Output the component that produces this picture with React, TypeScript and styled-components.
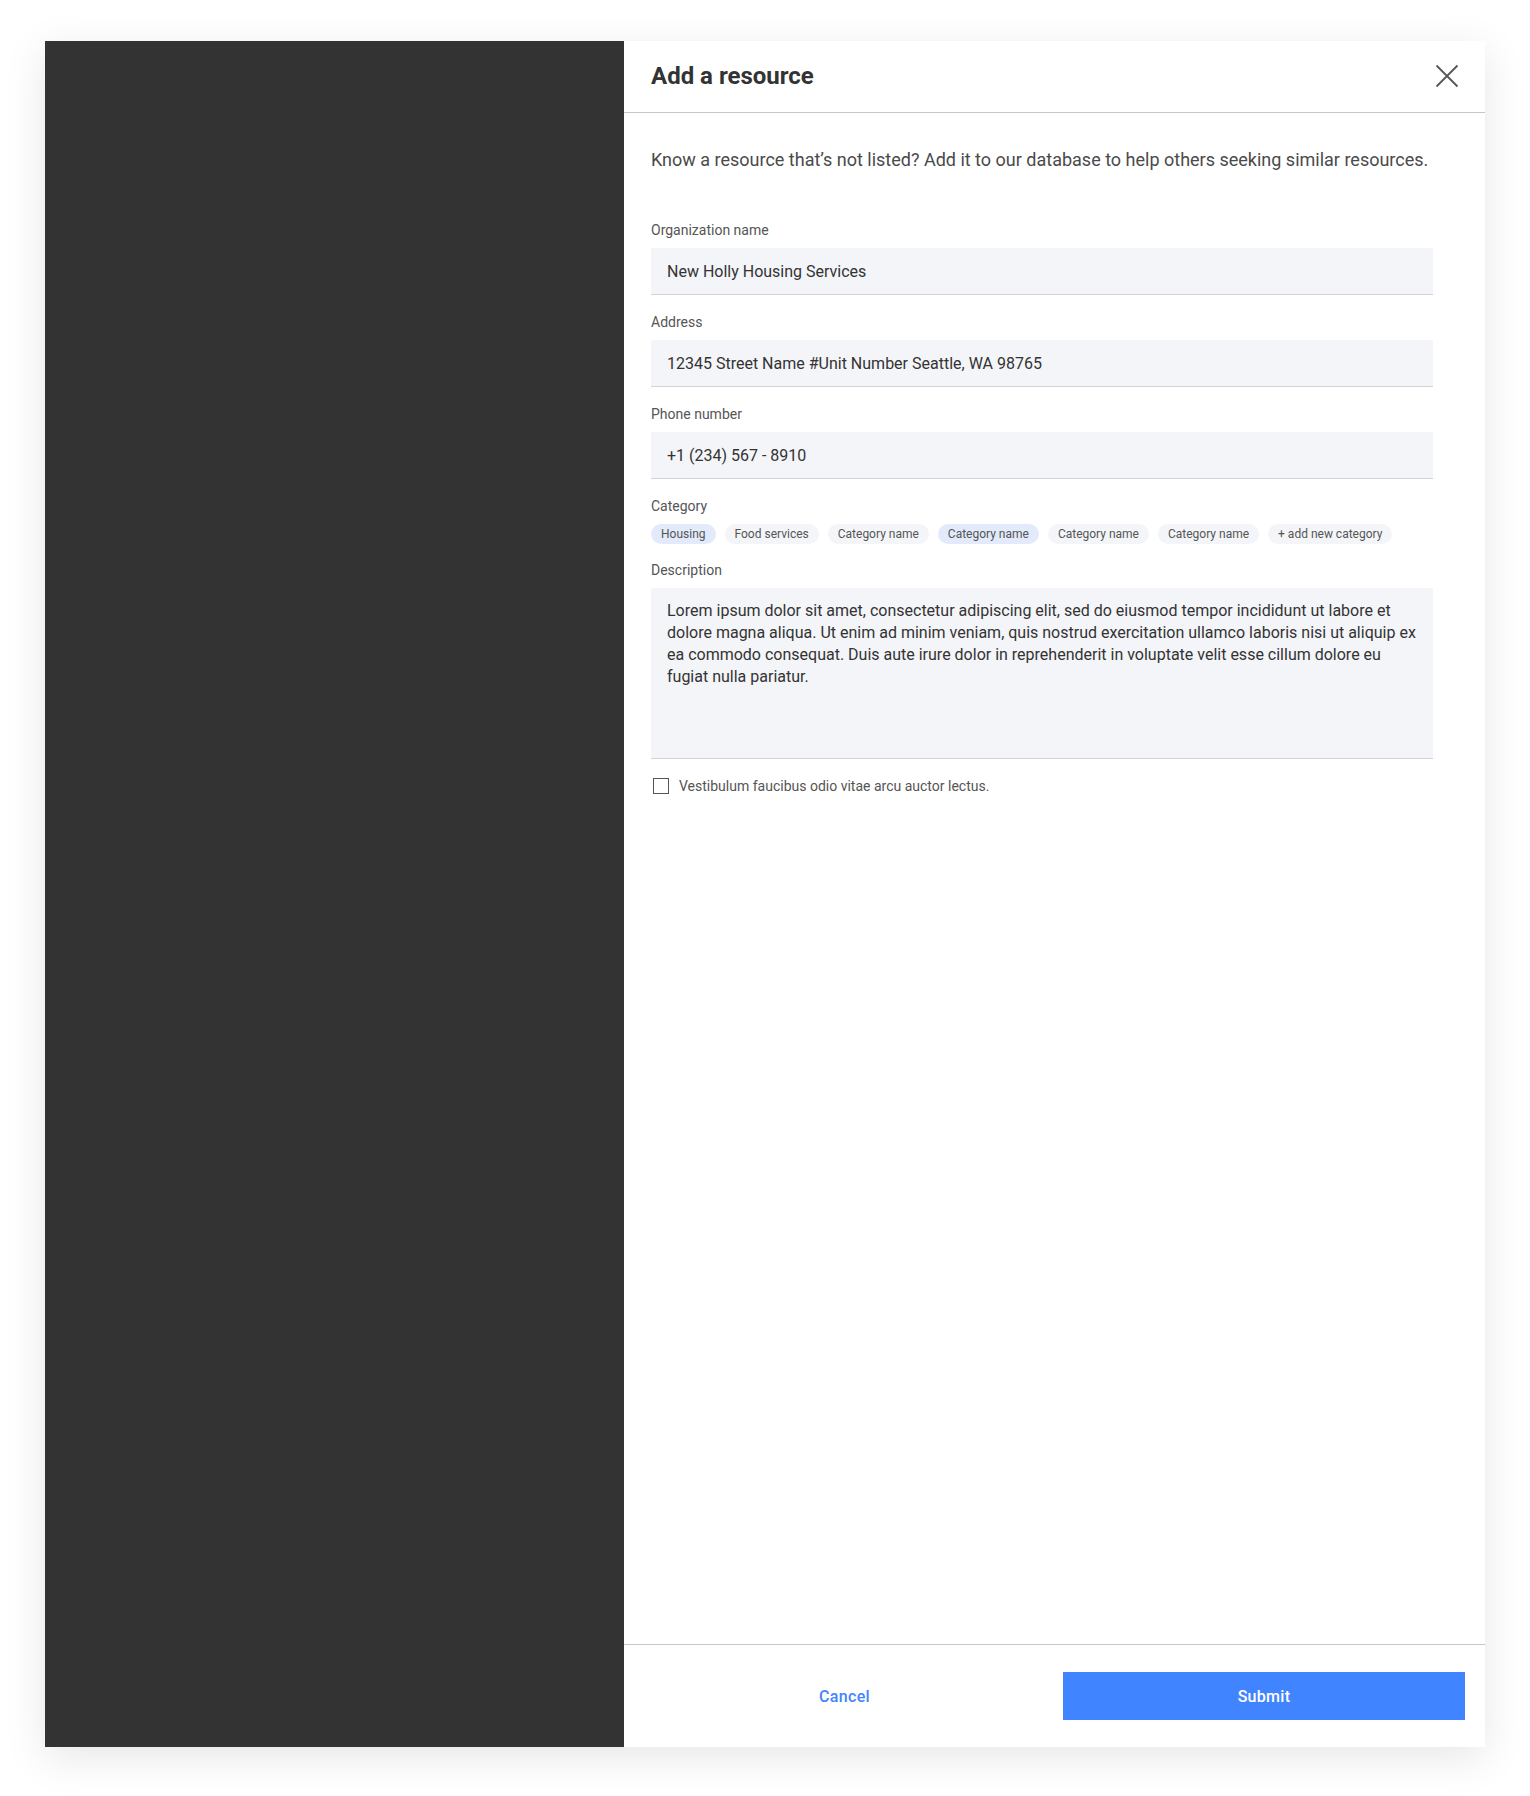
import React, { useState } from 'react';
import styled, { createGlobalStyle } from "styled-components";

const GlobalStyle = createGlobalStyle`
  html, body {
    margin: 0;
    padding: 0;
    background: #ffffff;
    font-family: Roboto, "Liberation Sans", Arial, sans-serif;
  }
  * {
    box-sizing: border-box;
  }
`

const Page = styled.div`
  padding: 41px 45px 49px;
  background: #ffffff;
`

const Modal = styled.div`
  display: flex;
  height: 1706px;
  background: #ffffff;
  box-shadow: 0 10px 40px rgba(0, 0, 0, 0.1);
`

const Backdrop = styled.div`
  width: 579px;
  flex-shrink: 0;
  background: #333333;
`

const Sheet = styled.div`
  flex: 1;
  display: flex;
  flex-direction: column;
  min-width: 0;
`

const Header = styled.div`
  height: 72px;
  display: flex;
  align-items: center;
  justify-content: space-between;
  padding: 0 26px 2px 27px;
  border-bottom: 1px solid #c6c6c6;
`

const Title = styled.h1`
  margin: 0;
  font-size: 24px;
  font-weight: 700;
  color: #333333;
`

const CloseButton = styled.button`
  width: 24px;
  height: 24px;
  padding: 0;
  border: none;
  background: transparent;
  display: flex;
  align-items: center;
  justify-content: center;
  cursor: pointer;
`

const Body = styled.div`
  flex: 1;
  padding: 35px 52px 0 27px;
`

const Intro = styled.p`
  margin: 0 0 49px;
  font-size: 18px;
  line-height: 24px;
  color: #4a4a4a;
  white-space: nowrap;
`

const Fields = styled.div`
  display: flex;
  flex-direction: column;
  gap: 18px;
`

const Field = styled.div`
  display: flex;
  flex-direction: column;
  gap: 9px;
`

const Label = styled.label`
  font-size: 14px;
  line-height: 18px;
  color: #555555;
`

const TextInput = styled.input`
  height: 47px;
  padding: 0 16px;
  border: none;
  border-bottom: 1px solid #d2d3d8;
  background: #f4f5f9;
  font-family: inherit;
  font-size: 16px;
  color: #333333;
  outline: none;
`

const TextArea = styled.textarea`
  height: 171px;
  padding: 12px 16px;
  border: none;
  border-bottom: 1px solid #d2d3d8;
  background: #f4f5f9;
  font-family: inherit;
  font-size: 16px;
  line-height: 22px;
  color: #333333;
  resize: none;
  outline: none;
`

const Chips = styled.div`
  display: flex;
  flex-wrap: wrap;
  gap: 9px;
  margin-bottom: -1px;
`

const Chip = styled.button<{ selected?: boolean }>`
  height: 20px;
  padding: 0 10px;
  border: none;
  border-radius: 10px;
  background: ${({ selected }) => selected ? "#e2eafb" : "#f4f5f9"};
  font-family: inherit;
  font-size: 12px;
  color: #555555;
  cursor: pointer;
`

const CheckRow = styled.label`
  display: flex;
  align-items: center;
  gap: 10px;
  margin-top: 19px;
  padding-left: 2px;
  font-size: 14px;
  color: #555555;
  cursor: pointer;
`

const Box = styled.span<{ checked: boolean }>`
  width: 16px;
  height: 16px;
  border: 1.5px solid #555555;
  background: ${({ checked }) => checked ? "#4184ff" : "transparent"};
`

const Footer = styled.div`
  height: 103px;
  display: flex;
  align-items: center;
  padding-right: 20px;
  border-top: 1px solid #c6c6c6;
`

const CancelButton = styled.button`
  flex: 1;
  height: 48px;
  padding: 0 0 0 2px;
  border: none;
  background: transparent;
  font-family: inherit;
  font-size: 16px;
  font-weight: 500;
  color: #4184ff;
  letter-spacing: 0.3px;
  cursor: pointer;
`

const SubmitButton = styled.button`
  width: 402px;
  height: 48px;
  border: none;
  background: #4184ff;
  font-family: inherit;
  font-size: 16px;
  font-weight: 500;
  color: #ffffff;
  letter-spacing: 0.3px;
  cursor: pointer;
`

const categories = [
  { name: "Housing", selected: true },
  { name: "Food services" },
  { name: "Category name" },
  { name: "Category name", selected: true },
  { name: "Category name" },
  { name: "Category name" },
  { name: "+ add new category" },
]

const description = "Lorem ipsum dolor sit amet, consectetur adipiscing elit, sed do eiusmod tempor incididunt ut labore et dolore magna aliqua. Ut enim ad minim veniam, quis nostrud exercitation ullamco laboris nisi ut aliquip ex ea commodo consequat. Duis aute irure dolor in reprehenderit in voluptate velit esse cillum dolore eu fugiat nulla pariatur."

export default function App() {
  const [checked, setChecked] = useState(false);

  return (
    <Page>
      <GlobalStyle />
      <Modal>
        <Backdrop />
        <Sheet>
          <Header>
            <Title>Add a resource</Title>
            <CloseButton aria-label="Close">
              <svg width="24" height="24" viewBox="0 0 24 24">
                <path d="M1.5 1.5 L22.5 22.5 M22.5 1.5 L1.5 22.5" stroke="#555555" strokeWidth="1.8" fill="none" />
              </svg>
            </CloseButton>
          </Header>
          <Body>
            <Intro>Know a resource that’s not listed? Add it to our database to help others seeking similar resources.</Intro>
            <Fields>
              <Field>
                <Label>Organization name</Label>
                <TextInput defaultValue="New Holly Housing Services" />
              </Field>
              <Field>
                <Label>Address</Label>
                <TextInput defaultValue="12345 Street Name #Unit Number Seattle, WA 98765" />
              </Field>
              <Field>
                <Label>Phone number</Label>
                <TextInput defaultValue="+1 (234) 567 - 8910" />
              </Field>
              <Field>
                <Label>Category</Label>
                <Chips>
                  {categories.map((c, i) => (
                    <Chip key={i} selected={c.selected}>{c.name}</Chip>
                  ))}
                </Chips>
              </Field>
              <Field>
                <Label>Description</Label>
                <TextArea defaultValue={description} />
              </Field>
            </Fields>
            <CheckRow onClick={() => setChecked(!checked)}>
              <Box checked={checked} />
              Vestibulum faucibus odio vitae arcu auctor lectus.
            </CheckRow>
          </Body>
          <Footer>
            <CancelButton>Cancel</CancelButton>
            <SubmitButton>Submit</SubmitButton>
          </Footer>
        </Sheet>
      </Modal>
    </Page>
  );
}
